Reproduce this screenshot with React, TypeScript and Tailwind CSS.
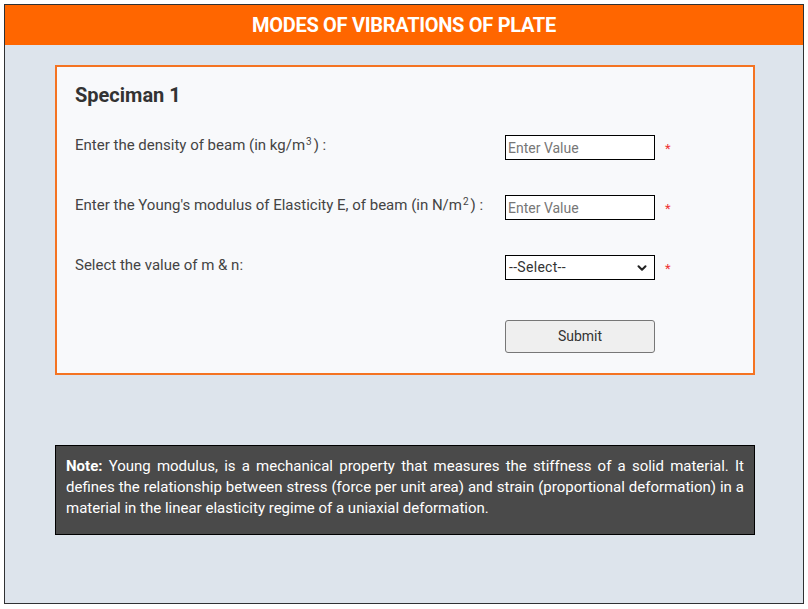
import { ChevronDown } from "lucide-react";

const rows = [
  { label: <>Enter the density of beam (in kg/m<sup className="ml-[1px] mr-[2px] text-[10px]">3</sup>) :</>, kind: "input" },
  { label: <>Enter the Young's modulus of Elasticity E, of beam (in N/m<sup className="ml-[1px] mr-[2px] text-[10px]">2</sup>) :</>, kind: "input" },
  { label: <>Select the value of m &amp; n:</>, kind: "select" },
];

export default function App() {
  return (
    <div className="p-1 font-['Roboto',sans-serif]">
      <div className="h-[600px] w-[800px] border border-[#2f3133] bg-[#dde4ec]">
        <div className="flex h-10 items-center justify-center bg-[#ff6600]">
          <h1 className="text-[20px] font-bold tracking-[-0.3px] text-white">MODES OF VIBRATIONS OF PLATE</h1>
        </div>

        <div className="ml-[50px] mt-5 h-[310px] w-[700px] border-2 border-[#f47322] bg-[#f8f9fb] pl-[18px] pt-4">
          <h2 className="text-[20px] leading-6 font-bold text-[#333]">Speciman 1</h2>
          <div className="mt-[28px] flex flex-col gap-[35px]">
            {rows.map((r, i) => (
              <div key={i} className="flex h-[25px] items-center">
                <label className="mb-[4px] w-[430px] text-[15px] text-[#444]">{r.label}</label>
                {r.kind === "input" ? (
                  <input
                    placeholder="Enter Value"
                    className="h-[25px] w-[150px] border border-black bg-white px-[2px] text-[14px] text-[#333] placeholder:text-[#777] focus:outline-none"
                  />
                ) : (
                  <div className="flex h-[25px] w-[150px] items-center justify-between border border-black bg-white pl-[3px] pr-[5px] text-[14px] text-[#333]">
                    <span className="tracking-[0.3px]">--Select--</span>
                    <ChevronDown className="h-[14px] w-[14px] text-[#222]" strokeWidth={3.5} />
                  </div>
                )}
                <span className="ml-[10px] mt-[2px] text-[13px] text-[#ee3333]">*</span>
              </div>
            ))}
          </div>
          <div className="mt-10 pl-[430px]">
            <button className="h-[33px] w-[150px] rounded-[3px] border border-[#777] bg-[#efefef] text-[14px] text-[#333]">
              Submit
            </button>
          </div>
        </div>

        <div className="ml-[50px] mt-[70px] h-[90px] w-[700px] border border-black bg-[#4a4a4a] px-[10px] pt-[10px] text-justify text-[15px] leading-[21px] font-normal text-white">
          <b className="font-bold">Note:</b> Young modulus, is a mechanical property that measures the stiffness of a solid material. It defines the relationship between stress (force per unit area) and strain (proportional deformation) in a material in the linear elasticity regime of a uniaxial deformation.
        </div>
      </div>
    </div>
  );
}
